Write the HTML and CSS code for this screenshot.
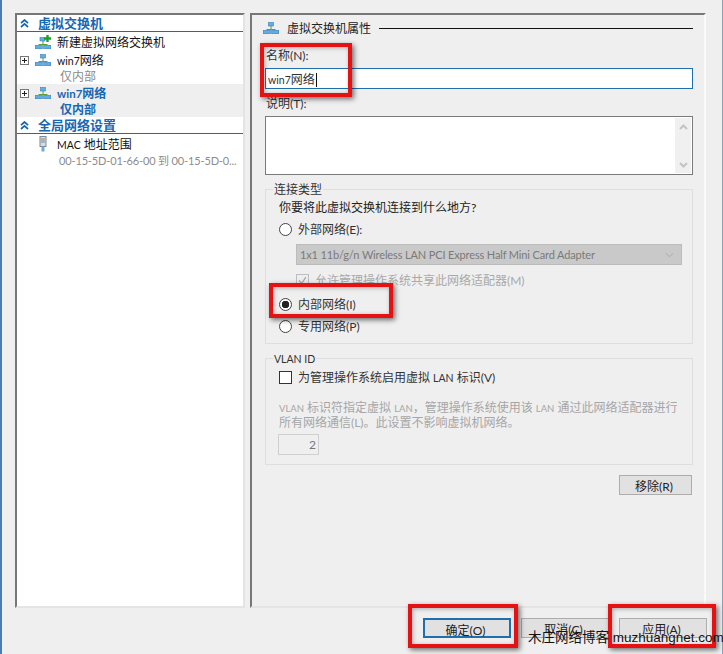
FILE: index.html
```html
<!DOCTYPE html>
<html lang="zh-CN">
<head>
<meta charset="utf-8">
<title>虚拟交换机管理器</title>
<link rel="stylesheet" href="styles.css">
</head>
<body>
<svg class="defs" width="0" height="0" aria-hidden="true">
  <defs>
    <symbol id="sw" viewBox="0 0 16 12">
      <path d="M8 4v4M3.500 7.500h9" fill="none" stroke="#5aa03c" stroke-width="1"/>
      <rect x="5.500" y="0.500" width="5" height="3.500" fill="#62aee4" stroke="#3a80bd" stroke-width=".6"/>
      <rect x="0.300" y="8.300" width="7" height="3.400" fill="#62aee4" stroke="#3a80bd" stroke-width=".6"/>
      <rect x="8.700" y="8.300" width="7" height="3.400" fill="#62aee4" stroke="#3a80bd" stroke-width=".6"/>
    </symbol>
    <symbol id="chev" viewBox="0 0 9 9">
      <path d="M1 4.2 4.5 1 8 4.2M1 8 4.5 4.8 8 8" fill="none" stroke="#1565b0" stroke-width="1.7"/>
    </symbol>
  </defs>
</svg>
<div class="window">
  <main class="main">
    <nav class="tree">
      <div class="sec"><svg class="chev"><use href="#chev"/></svg><span>虚拟交换机</span></div>
      <div class="row row-new">
        <span class="exp-space"></span>
        <svg class="ico ico-new" viewBox="0 0 16 14">
          <path d="M8 6v4M3.500 9.500h9" fill="none" stroke="#5aa03c" stroke-width="1"/>
          <rect x="5" y="2.500" width="5" height="3.500" fill="#62aee4" stroke="#3a80bd" stroke-width=".6"/>
          <rect x="0.300" y="10.300" width="7" height="3.400" fill="#62aee4" stroke="#3a80bd" stroke-width=".6"/>
          <rect x="8.700" y="10.300" width="7" height="3.400" fill="#62aee4" stroke="#3a80bd" stroke-width=".6"/>
          <path d="M12.500 0v7M9 3.500h7" stroke="#1f9e2c" stroke-width="2.400"/>
        </svg>
        <span class="name">新建虚拟网络交换机</span>
      </div>
      <div class="group">
        <div class="row"><span class="exp"></span><svg class="ico"><use href="#sw"/></svg><span class="name"><span class="lat">win7</span>网络</span></div>
        <div class="sub">仅内部</div>
      </div>
      <div class="group group-sel">
        <div class="row"><span class="exp"></span><svg class="ico"><use href="#sw"/></svg><span class="name"><span class="lat">win7</span>网络</span></div>
        <div class="sub">仅内部</div>
      </div>
      <div class="sec sec-2"><svg class="chev"><use href="#chev"/></svg><span>全局网络设置</span></div>
      <div class="row row-mac">
        <span class="exp-space"></span>
        <svg class="ico ico-mac" viewBox="0 0 10 16">
          <rect x="2" y="0.5" width="6" height="10" fill="#d8dde2" stroke="#7d8790"/>
          <path d="M4 2v5M6 2v5" stroke="#7d8790"/>
          <rect x="3.5" y="10.5" width="3" height="5" fill="#6fa8d8"/>
        </svg>
        <span class="name"><span class="lat">MAC</span> 地址范围</span>
      </div>
      <div class="sub sub-mac">00-15-5D-01-66-00 到 00-15-5D-0...</div>
    </nav>
    <section class="props">
      <div class="title">
        <svg class="ico"><use href="#sw"/></svg>
        <span>虚拟交换机属性</span>
        <i class="rule"></i>
      </div>
      <div class="lbl lbl-name">名称(N):</div>
      <div class="input"><span class="lat">win7</span>网络<i class="caret"></i></div>
      <div class="lbl lbl-desc">说明(T):</div>
      <div class="textarea">
        <div class="vscroll">
          <svg viewBox="0 0 9 6" class="sc"><path d="M1 5 4.500 1.500 8 5" fill="none" stroke="#c4c4c4" stroke-width="2"/></svg>
          <svg viewBox="0 0 9 6" class="sc"><path d="M1 1 4.500 4.500 8 1" fill="none" stroke="#c4c4c4" stroke-width="2"/></svg>
        </div>
      </div>
      <fieldset class="fs fs-conn">
        <legend>连接类型</legend>
        <div class="q">你要将此虚拟交换机连接到什么地方?</div>
        <div class="opt opt-ext"><span class="radio"></span>外部网络(E):</div>
        <div class="select"><span>1x1 11b/g/n Wireless LAN PCI Express Half Mini Card Adapter</span>
          <svg viewBox="0 0 10 6" class="sel-arrow"><path d="M1 1 5 5 9 1" fill="none" stroke="#a8a8a8"/></svg>
        </div>
        <div class="opt opt-share">
          <span class="check check-off"><svg viewBox="0 0 13 13"><path d="M2.500 6.500 5.500 10 10.500 2.500" fill="none" stroke="#a9a9a9" stroke-width="1.500"/></svg></span>
          <span class="dim">允许管理操作系统共享此网络适配器(M)</span>
        </div>
        <div class="opt opt-int"><span class="radio radio-on"></span>内部网络(I)</div>
        <div class="opt opt-pri"><span class="radio"></span>专用网络(P)</div>
      </fieldset>
      <fieldset class="fs fs-vlan">
        <legend>VLAN ID</legend>
        <div class="opt opt-vlan"><span class="check"></span><span>为管理操作系统启用虚拟 <span class="lat">LAN</span> 标识(V)</span></div>
        <p class="note"><span class="lat-s">VLAN</span> 标识符指定虚拟 <span class="lat-s">LAN</span>，管理操作系统使用该 <span class="lat-s">LAN</span> 通过此网络适配器进行<br>所有网络通信(L)。此设置不影响虚拟机网络。</p>
        <div class="spin">2</div>
      </fieldset>
      <div class="remove-wrap"><button class="btn btn-remove" type="button">移除(R)</button></div>
    </section>
  </main>
  <footer class="foot">
    <button class="btn btn-ok" type="button">确定(O)</button>
    <button class="btn" type="button">取消(C)</button>
    <button class="btn" type="button">应用(A)</button>
  </footer>
  <div class="mark mark-name"></div>
  <div class="mark mark-radio"></div>
  <div class="mark mark-ok"></div>
  <div class="mark mark-apply"></div>
  <div class="watermark">木庄网络博客 muzhuangnet.com</div>
</div>
</body>
</html>
```
FILE: styles.css
```css
* { box-sizing: border-box; }
html, body { margin: 0; padding: 0; }
body {
  width: 723px;
  height: 654px;
  overflow: hidden;
  font: 12px/18px Lato, "Noto Sans CJK SC", sans-serif;
  color: #333;
  background: #efefef;
}
.defs { position: absolute; }
.lat { font-size: 10.5px; }
.lat-s { font-size: 9.5px; }
.window {
  position: relative;
  width: 723px;
  height: 654px;
  display: flex;
  flex-direction: column;
  border-left: 2px solid #4a7cb0;
  border-right: 1px solid #8aa0b8;
}
.main {
  display: flex;
  gap: 5px;
  height: 608px;
  padding: 13px 0 0 13px;
}
.tree, .props {
  border: 2px solid #e4e4e4;
  border-top-color: #777;
  border-left-color: #777;
}
.tree {
  width: 230px;
  background: #fff;
}
.props {
  width: 456px;
  padding: 0 11px 0 13px;
  display: flex;
  flex-direction: column;
  border-right-color: #fafafa;
}

/* tree */
.sec {
  display: flex;
  align-items: center;
  height: 16px;
  margin-top: 1px;
  padding-left: 3px;
  border-bottom: 1px solid #1f6aa8;
  font-size: 13px;
  font-weight: 700;
  color: #1767b4;
}
.sec span { margin-left: 9px; line-height: 15px; }
.chev { width: 9px; height: 9px; }
.sec-2 { margin-top: 0; height: 17px; }
.row {
  display: flex;
  align-items: flex-start;
  height: 16px;
  padding-left: 3px;
  color: #111;
}
.row-new { margin-top: 2px; margin-bottom: 2px; }
.exp, .exp-space { width: 9px; height: 9px; flex: none; align-self: center; }
.exp {
  border: 1px solid #777;
  background:
    linear-gradient(#222, #222) center / 5px 1px no-repeat,
    linear-gradient(#222, #222) center / 1px 5px no-repeat,
    #fff;
}
.ico { width: 16px; height: 12px; flex: none; margin-left: 6px; align-self: center; }
.ico-new { height: 14px; }
.name { margin-left: 6px; }
.sub { height: 16px; padding-left: 43px; color: #8c8c8c; }
.group-sel { background: #efefef; height: 33px; padding-top: 1px; }
.group-sel .name, .group-sel .sub { color: #1767b4; font-weight: 700; }
.group-sel .lat { font-size: 11.5px; }
.row-mac { margin-top: 2px; }
.ico-mac { width: 10px; height: 16px; margin-left: 9px; margin-right: 3px; }
.sub-mac { padding-left: 42px; font-size: 11px; letter-spacing: -.15px; white-space: nowrap; }

/* form */
.title {
  display: flex;
  align-items: flex-start;
  margin-top: 5px;
  height: 16px;
  color: #222;
}
.title .ico { margin-left: -2px; margin-right: 8px; }
.title .rule { flex: 1; height: 1px; margin-left: 8px; align-self: center; background: #111; }
.lbl { height: 16px; color: #333; padding-left: 1px; }
.lbl-name { margin-top: 11px; }
.lbl-desc { margin-top: 6px; }
.input {
  margin-top: 5px;
  height: 21px;
  line-height: 21px;
  padding-left: 2px;
  border: 1px solid #1f6fae;
  background: #fff;
  color: #333;
}
.caret { display: inline-block; width: 1px; height: 14px; margin-left: 1px; vertical-align: -3px; background: #111; }
.textarea {
  display: flex;
  justify-content: flex-end;
  margin-top: 5px;
  height: 59px;
  padding: 1px;
  border: 1px solid #7a7a7a;
  background: #fff;
}
.vscroll {
  display: flex;
  flex-direction: column;
  justify-content: space-between;
  align-items: center;
  width: 16px;
  padding: 6px 0 5px;
  background: #f0f0f0;
}
.sc { width: 9px; height: 6px; }
.fs {
  margin: 6px 0 0;
  padding: 0 0 9px 13px;
  min-width: 0;
  border: 1px solid #dedede;
}
.fs legend {
  margin-left: -6px;
  padding: 0 1px;
  height: 16px;
  color: #333;
}
.fs-vlan legend { font-size: 10.5px; }
.q { margin-top: 2px; color: #222; height: 16px; }
.opt {
  display: flex;
  align-items: flex-start;
  height: 16px;
  color: #333;
}
.opt-ext { margin-top: 6px; }
.opt-share { margin-top: 7px; padding-left: 17px; }
.opt-int { margin-top: 8px; }
.opt-pri { margin-top: 6px; }
.opt-vlan { margin-top: 3px; }
.radio {
  width: 13px;
  height: 13px;
  margin-right: 6px;
  flex: none;
  align-self: center;
  border: 1px solid #444;
  border-radius: 50%;
  background: #fff;
}
.radio-on { background: radial-gradient(circle, #222 0 3.500px, #fff 4px); }
.check {
  width: 13px;
  height: 13px;
  margin-right: 6px;
  flex: none;
  align-self: center;
  border: 1px solid #333;
  background: #fff;
}
.check svg { display: block; width: 11px; height: 11px; }
.check-off { border-color: #bdbdbd; background: #eee; }
.dim { color: #a9a9a9; }
.select {
  display: flex;
  align-items: center;
  justify-content: space-between;
  margin: 7px 10px 0 17px;
  height: 21px;
  padding: 0 3px;
  font-size: 11px;
  letter-spacing: -.14px;
  background: #c9c9c9;
  border: 1px solid #bcbcbc;
  color: #7a7a7a;
}
.sel-arrow { width: 9px; height: 6px; margin-right: 4px; }
.note {
  margin: 16px 0 0;
  font-size: 12px;
  line-height: 14px;
  color: #a6a6a6;
  white-space: nowrap;
}
.spin {
  margin: 4px 0 0 -1px;
  width: 41px;
  height: 21px;
  line-height: 19px;
  padding-right: 2px;
  text-align: right;
  border: 1px solid #cfcfcf;
  background: #efefef;
  color: #777;
}
.remove-wrap { display: flex; justify-content: flex-end; margin-top: 10px; padding-right: 1px; }
.btn {
  width: 88px;
  height: 20px;
  padding: 2px 3px 0 0;
  font: inherit;
  color: #222;
  background: #e1e1e1;
  border: 1px solid #adadad;
}
.btn-remove { width: 73px; }
.btn-ok { border: 2px solid #1f6fae; }
.foot {
  display: flex;
  justify-content: flex-end;
  gap: 10px;
  padding: 10px 15px 0 0;
}

/* overlays */
.mark {
  position: absolute;
  border: 4px solid #e41212;
  box-shadow: 2px 2px 5px rgba(0,0,0,.55), inset 1px 1px 4px rgba(0,0,0,.3);
}
.mark-name { left: 258px; top: 43px; width: 92px; height: 54px; }
.mark-radio { left: 267px; top: 283px; width: 124px; height: 35px; }
.mark-ok { left: 406px; top: 604px; width: 110px; height: 44px; }
.mark-apply { left: 606px; top: 604px; width: 108px; height: 44px; }
.watermark {
  position: absolute;
  left: 526px;
  top: 629px;
  font-family: "Liberation Sans", "Noto Sans CJK SC", sans-serif;
  font-size: 13.5px;
  line-height: 18px;
  color: #111;
  white-space: nowrap;
}
```
